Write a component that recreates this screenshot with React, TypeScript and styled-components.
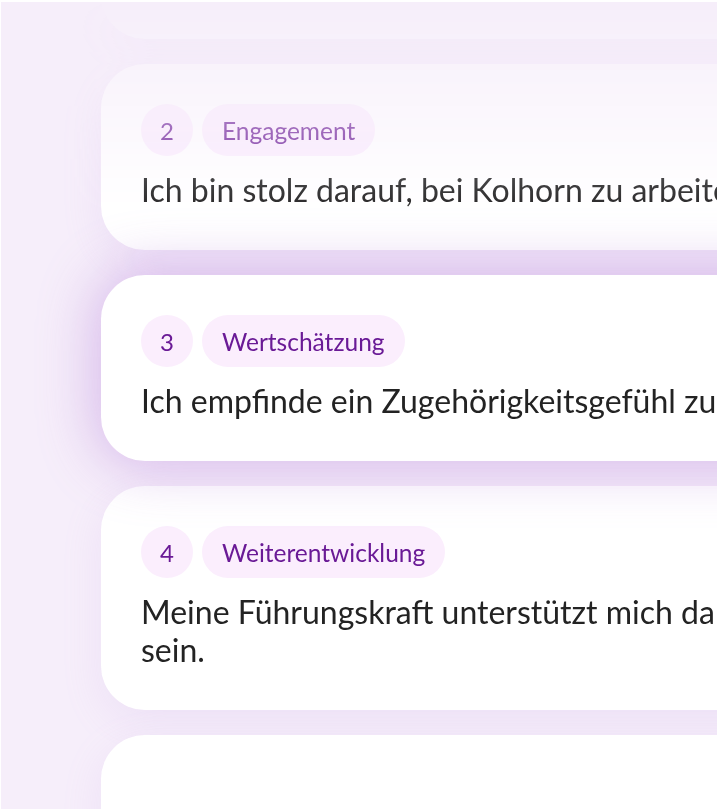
import React from 'react';
import styled, { createGlobalStyle } from 'styled-components';

const GlobalStyle = createGlobalStyle`
  html, body {
    margin: 0;
    padding: 0;
    background: #ffffff;
  }
  body {
    font-family: Lato, "Noto Sans", sans-serif;
    overflow: hidden;
  }
`;

const Panel = styled.div`
  margin: 2px 0 0 1px;
  height: 807px;
  background: #f6eefa;
  overflow: hidden;
`;

// the list is scrolled, so the first card sits mostly above the panel
const List = styled.div`
  display: flex;
  flex-direction: column;
  gap: 25px;
  width: 1000px;
  margin-top: -149px;
  padding-left: 100px;
  -webkit-mask-image: linear-gradient(to bottom, transparent 145px, #000 360px);
  mask-image: linear-gradient(to bottom, transparent 145px, #000 360px);
`;

const Card = styled.div<{ $active?: boolean }>`
  position: relative;
  z-index: ${(p) => (p.$active ? 1 : 0)};
  box-sizing: border-box;
  min-height: 186px;
  padding: 40px 40px 41px;
  display: flex;
  flex-direction: column;
  gap: 15px;
  background: #ffffff;
  border-radius: 44px;
  box-shadow: ${(p) =>
    p.$active
      ? '0 0 55px 6px rgba(175, 120, 215, 0.45)'
      : '0 12px 40px rgba(190, 150, 225, 0.14)'};
`;

const Tags = styled.div`
  display: flex;
  align-items: center;
  gap: 9px;
`;

const Number = styled.div`
  width: 52px;
  height: 52px;
  border-radius: 50%;
  display: flex;
  align-items: center;
  justify-content: center;
  background: #fbeefd;
  color: #6a1a96;
  font-size: 24px;
`;

const Tag = styled.div`
  height: 52px;
  padding: 0 20px;
  border-radius: 26px;
  display: flex;
  align-items: center;
  background: #fbeefd;
  color: #6a1a96;
  font-size: 24.5px;
`;

const Question = styled.p`
  margin: 0;
  max-width: 860px;
  font-size: 32px;
  line-height: 38px;
  color: #232323;
`;

type Item = { n: number; tag: string; text: string };

const items: Item[] = [
  { n: 2, tag: 'Engagement', text: 'Ich bin stolz darauf, bei Kolhorn zu arbeiten.' },
  { n: 3, tag: 'Wertschätzung', text: 'Ich empfinde ein Zugehörigkeitsgefühl zu meinem Team.' },
  {
    n: 4,
    tag: 'Weiterentwicklung',
    text: 'Meine Führungskraft unterstützt mich dabei, erfolgreich zu sein.',
  },
];

export default function App() {
  const active = 3;
  return (
    <>
      <GlobalStyle />
      <Panel>
        <List>
          {/* previous question, scrolled out of view */}
          <Card />
          {items.map((item) => (
            <Card key={item.n} $active={item.n === active}>
              <Tags>
                <Number>{item.n}</Number>
                <Tag>{item.tag}</Tag>
              </Tags>
              <Question>{item.text}</Question>
            </Card>
          ))}
          <Card />
        </List>
      </Panel>
    </>
  );
}
